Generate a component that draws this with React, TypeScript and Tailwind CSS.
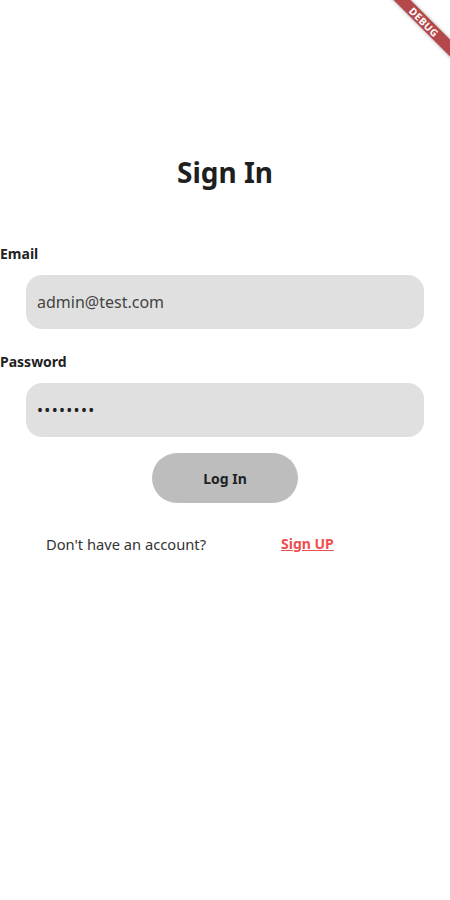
import React from 'react';

function DebugBanner() {
    return (
        <div className="pointer-events-none absolute right-0 top-0 h-[60px] w-[60px] overflow-hidden">
            <div className="absolute left-[-26px] top-[16px] flex h-[12px] w-[120px] rotate-45 items-center justify-center bg-[#b5484a] shadow-[0_0_4px_rgba(0,0,0,0.35)]">
                <span className="text-[10px] font-bold leading-none tracking-[0.5px] text-white">
                    DEBUG
                </span>
            </div>
        </div>
    );
}

export default function App() {
    return (
        <div
            className="relative min-h-[900px] w-full bg-white text-[#1f1f1f]"
            style={{ fontFamily: '"Noto Sans", "Open Sans", sans-serif' }}>
            <DebugBanner />
            <div className="flex flex-col pt-[152px]">
                <h1 className="text-center text-[28px] font-bold leading-[40px]">
                    Sign In
                </h1>

                <label className="mt-[52px] text-[14px] font-bold leading-[20px]">
                    Email
                </label>
                <div className="mx-[26px] mt-[11px] flex h-[54px] items-center rounded-[16px] bg-[#e0e0e0] px-[11px] text-[16px] text-[#444]">
                    admin@test.com
                </div>

                <label className="mt-[23px] text-[14px] font-bold leading-[20px]">
                    Password
                </label>
                <div className="mx-[26px] mt-[11px] flex h-[54px] items-center rounded-[16px] bg-[#e0e0e0] px-[11px] text-[16px] tracking-[1.3px] text-[#222]">
                    ••••••••
                </div>

                <div className="mt-[16px] flex justify-center">
                    <button className="h-[50px] w-[146px] rounded-[25px] bg-[#bdbdbd] text-[14px] font-bold text-[#222]">
                        Log In
                    </button>
                </div>

                <div className="mt-[31px] flex items-center pl-[46px] text-[14.7px] leading-[20px]">
                    <span className="w-[235px] text-[#333]">Don't have an account?</span>
                    <a className="text-[14px] font-bold text-[#ef4e4e] underline">Sign UP</a>
                </div>
            </div>
        </div>
    );
}
